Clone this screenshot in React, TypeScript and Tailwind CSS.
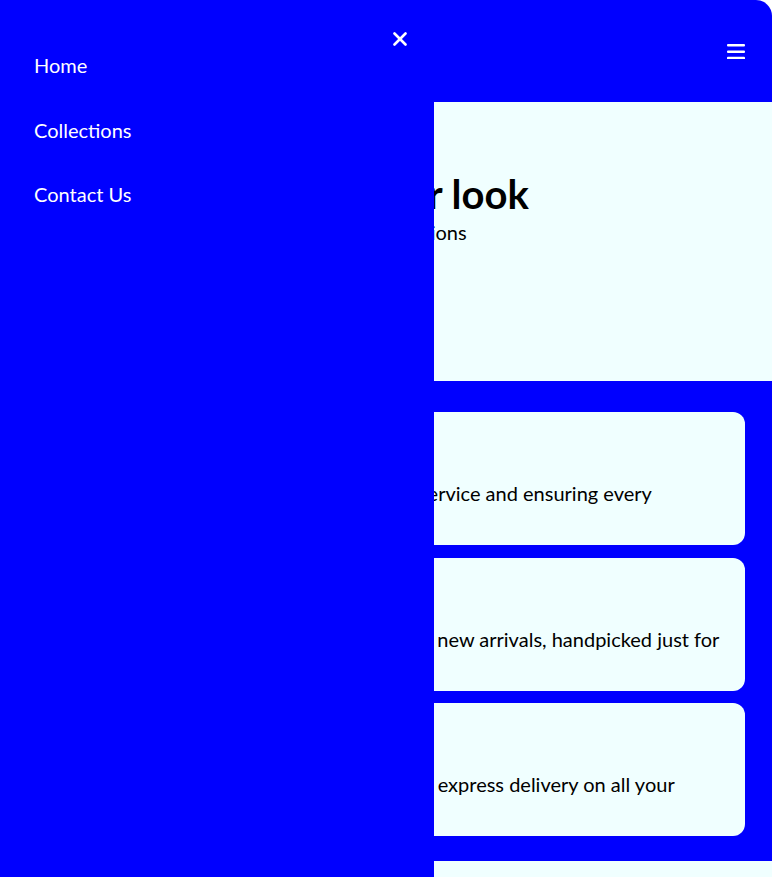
import { useState } from 'react'

type Feature = {
  title: string
  lead: string
  rest: string
}

const features: Feature[] = [
  {
    title: 'Our Service',
    lead: 'We take pride in offering honest, personal service and ensuring every',
    rest: 'customer leaves happy.',
  },
  {
    title: 'New Arrivals',
    lead: 'Browse through our big weekly collection of new arrivals, handpicked just for',
    rest: 'you.',
  },
  {
    title: 'Fast Shipping',
    lead: 'We proudly offer free standard shipping and express delivery on all your',
    rest: 'orders.',
  },
]

const navLinks = ['Home', 'Collections', 'Contact Us']

function BarsIcon() {
  return (
    <svg width="18" height="16" viewBox="0 0 18 16" fill="white">
      <rect x="0" y="1" width="18" height="2.6" rx="1" />
      <rect x="0" y="7.4" width="18" height="2.6" rx="1" />
      <rect x="0" y="13.8" width="18" height="2.6" rx="1" />
    </svg>
  )
}

function CloseIcon() {
  return (
    <svg width="14" height="14" viewBox="0 0 14 14" stroke="white" strokeWidth="2.6" strokeLinecap="round">
      <line x1="1.5" y1="1.5" x2="12.5" y2="12.5" />
      <line x1="12.5" y1="1.5" x2="1.5" y2="12.5" />
    </svg>
  )
}

export default function App() {
  const [menuOpen, setMenuOpen] = useState(true)

  return (
    <div className="min-h-screen bg-white font-['Lato',sans-serif]">
      <div className="relative min-h-screen overflow-hidden rounded-tr-2xl bg-[#0000ff]">
        <header className="flex h-[102px] items-center justify-end pr-[20px]">
          <button className="flex h-8 w-8 items-center justify-center" onClick={() => setMenuOpen(true)}>
            <BarsIcon />
          </button>
        </header>

        <section className="h-[279px] bg-[#f0ffff] pl-[198px] pr-[27px] pt-[68px]">
          <h1 className="text-[40px] font-bold leading-[48px] text-black">Discover your look</h1>
          <p className="text-[20px] leading-7 text-black">Explore our fashion collections</p>
        </section>

        <div className="flex flex-col gap-[12.5px] px-[27px] pb-[25px] pt-[31px]">
          {features.map((feature) => (
            <div key={feature.title} className="h-[133px] rounded-xl bg-[#f0ffff] px-5 pt-5">
              <h3 className="text-2xl font-bold leading-9 text-black">{feature.title}</h3>
              <p className="mt-[12px] text-[20px] leading-[26px] text-black">
                {feature.lead}
                <br />
                {feature.rest}
              </p>
            </div>
          ))}
        </div>

        <section className="h-[300px] bg-[#f0ffff]" />

        {menuOpen ? (
          <nav className="absolute left-0 top-0 h-full w-[434px] bg-[#0000ff]">
            <button
              className="absolute right-[25px] top-[30px] flex h-[18px] w-[18px] items-center justify-center"
              onClick={() => setMenuOpen(false)}
            >
              <CloseIcon />
            </button>
            <ul className="pt-[33px]">
              {navLinks.map((link) => (
                <li key={link} className="flex h-[64.5px] items-center pl-[34px]">
                  <a href="#" className="text-xl leading-7 text-white">
                    {link}
                  </a>
                </li>
              ))}
            </ul>
          </nav>
        ) : null}
      </div>
    </div>
  )
}
